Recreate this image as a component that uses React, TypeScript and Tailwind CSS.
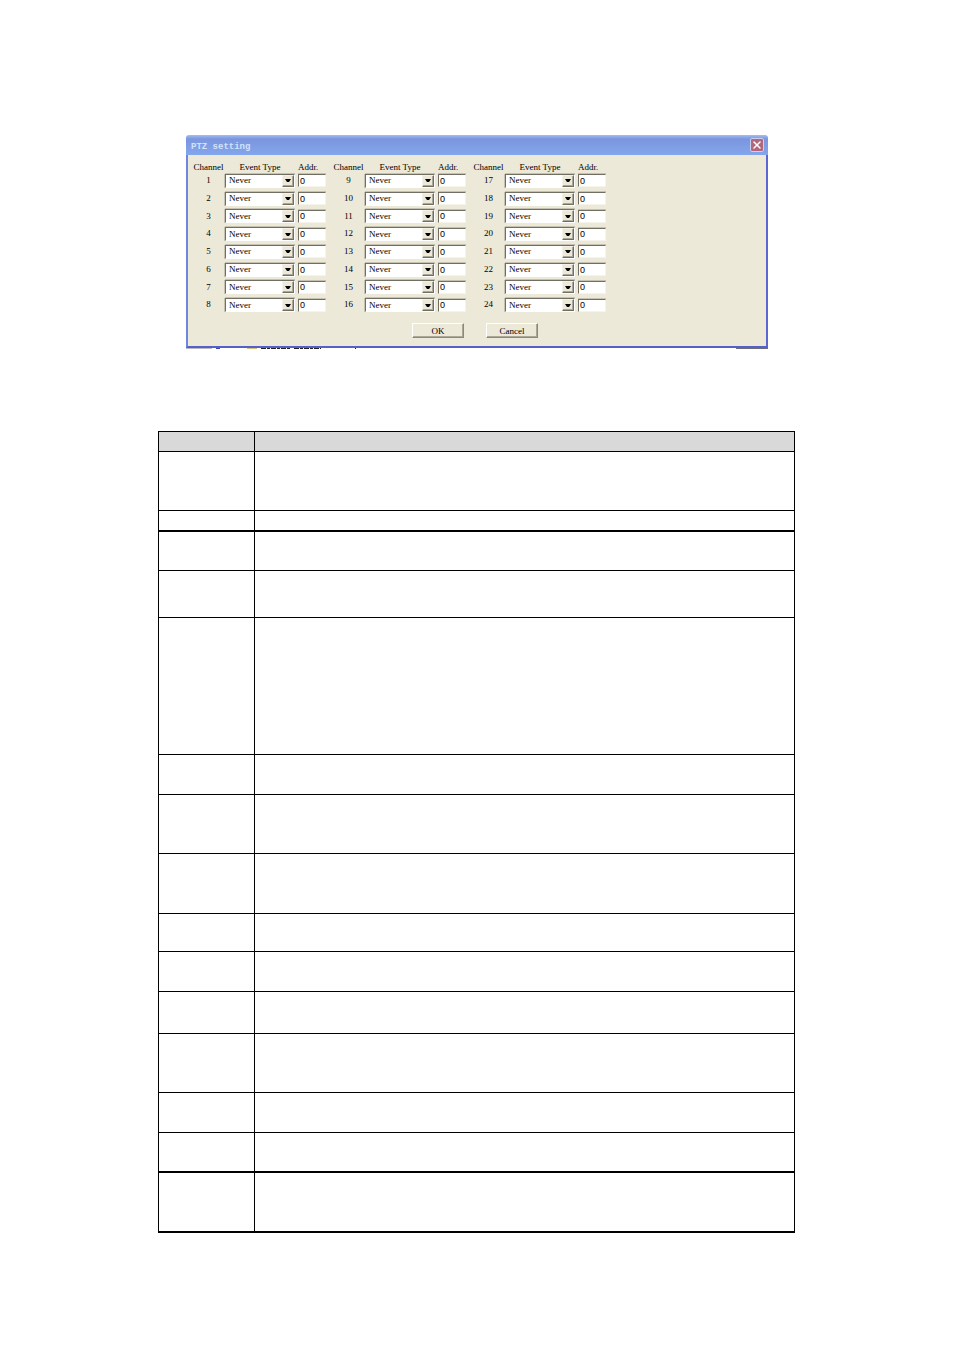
import { X } from "lucide-react";

const CHANNEL_GROUPS = [
  [1, 2, 3, 4, 5, 6, 7, 8],
  [9, 10, 11, 12, 13, 14, 15, 16],
  [17, 18, 19, 20, 21, 22, 23, 24],
];

// row heights of the description table, including the line under each row
const ROWS = [
  "h-[59px] border-b",
  "h-[21px] border-b-2",
  "h-[39px] border-b",
  "h-[47px] border-b",
  "h-[137px] border-b",
  "h-[40px] border-b",
  "h-[59px] border-b",
  "h-[60px] border-b",
  "h-[38px] border-b",
  "h-[40px] border-b",
  "h-[42px] border-b",
  "h-[59px] border-b",
  "h-[40px] border-b",
  "h-[40px] border-b-2",
  "h-[60px] border-b-2",
];

function ChannelRow({ channel }: { channel: number }) {
  return (
    <div className="flex items-center">
      <label htmlFor={`type-${channel}`} className="w-[33px] text-center">
        {channel}
      </label>
      <div className="relative w-[70px]">
        <select
          id={`type-${channel}`}
          className="block h-[14px] w-full appearance-none rounded-none border border-b-white border-l-[#716f64] border-r-white border-t-[#716f64] bg-white pl-[3px] leading-[11px] shadow-[0_-1px_0_#c5c2b2,-1px_0_0_#c5c2b2] outline-none"
        >
          <option>Never</option>
        </select>
        <span className="pointer-events-none absolute right-px top-px flex h-[12px] w-[12px] items-center justify-center border border-b-[#716f64] border-l-[#f4f2e8] border-r-[#716f64] border-t-[#f4f2e8] bg-[#ece9d8] shadow-[inset_-1px_-1px_0_#aca899]">
          <svg viewBox="0 0 6 3" className="h-[3px] w-[6px]">
            <path d="M0 0h6L4 3H2z" fill="#000" />
          </svg>
        </span>
      </div>
      <input
        type="text"
        aria-label={`Address ${channel}`}
        defaultValue="0"
        className="ml-[3px] block h-[13px] w-[28px] rounded-none border border-b-[#f6f4ea] border-l-[#716f64] border-r-[#f6f4ea] border-t-[#716f64] bg-white pl-px font-['Liberation_Sans',sans-serif] leading-[11px] shadow-[0_-1px_0_#c5c2b2] outline-none"
      />
    </div>
  );
}

function ChannelGroup({ channels }: { channels: number[] }) {
  return (
    <div>
      <div className="flex h-[10px] items-center leading-[10px]">
        <span className="w-[33px] text-center">Channel</span>
        <span className="w-[70px] text-center">Event Type</span>
        <span className="ml-[3px]">Addr.</span>
      </div>
      <div className="grid h-[142px] grid-rows-8">
        {channels.map((channel) => (
          <ChannelRow key={channel} channel={channel} />
        ))}
      </div>
    </div>
  );
}

function DialogButton({ children }: { children: string }) {
  return (
    <button
      type="button"
      className="h-[15px] w-[52px] border border-b-[#8c897a] border-l-white border-r-[#8c897a] border-t-white bg-[#ece9d8] leading-[12px] shadow-[inset_-1px_-1px_0_#aca899]"
    >
      {children}
    </button>
  );
}

// sliver of the window behind, left visible under the dialog
function BackgroundSliver() {
  return (
    <svg
      viewBox="0 0 582 1"
      preserveAspectRatio="none"
      className="block h-px w-full"
      aria-hidden="true"
    >
      <path d="M0 .5h26" stroke="#b9b9bd" />
      <path d="M30 .5h4" stroke="#3b47b0" />
      <path d="M61 .5h10" stroke="#d8c27c" />
      <path d="M75 .5h29M108 .5h27" stroke="#222" strokeDasharray="5 1 3 1" />
      <path d="M169 .5h1" stroke="#222" />
      <path d="M550 .5h32" stroke="#6d6d78" />
    </svg>
  );
}

function PtzDialog() {
  return (
    <section className="mx-auto max-w-[582px] font-['Liberation_Serif',serif] text-[9px] text-black">
      <header className="flex h-[20px] items-center justify-between rounded-t-[3px] bg-linear-to-b from-[#a4bdf0] via-[#7a96df] via-20% to-[#83a6ec] pl-[5px] pr-[4px]">
        <h1 className="pt-[3px] font-['Liberation_Mono',monospace] text-[9px] font-bold leading-[12px] text-[#d3e2fb]">
          PTZ setting
        </h1>
        <button
          type="button"
          aria-label="Close"
          className="flex h-[14px] w-[14px] items-center justify-center rounded-xs border border-[#c9cdf0] bg-[#b2677c] text-white"
        >
          <X size={12} strokeWidth={3} />
        </button>
      </header>
      <form className="border-x-2 border-b-2 border-b-[#5560c8] border-l-[#6f86e0] border-r-[#5c68d2] bg-[#ece9d8] pb-[8px] pt-[7px]">
        <div className="flex gap-[6px] pl-[4px]">
          {CHANNEL_GROUPS.map((channels) => (
            <ChannelGroup key={channels[0]} channels={channels} />
          ))}
        </div>
        <div className="mt-[9px] flex justify-center gap-[22px] pr-1">
          <DialogButton>OK</DialogButton>
          <DialogButton>Cancel</DialogButton>
        </div>
      </form>
      <BackgroundSliver />
    </section>
  );
}

function DescriptionTable() {
  return (
    <table className="w-full table-fixed border-separate border-spacing-0 border-l border-t border-black">
      <colgroup>
        <col className="w-[96px]" />
        <col />
      </colgroup>
      <thead>
        <tr>
          <th className="h-[20px] border-b border-r border-black bg-[#d9d9d9] p-0" />
          <th className="h-[20px] border-b border-r border-black bg-[#d9d9d9] p-0" />
        </tr>
      </thead>
      <tbody>
        {ROWS.map((row, i) => (
          <tr key={i}>
            <td className={`${row} border-r border-black p-0`} />
            <td className={`${row} border-r border-black p-0`} />
          </tr>
        ))}
      </tbody>
    </table>
  );
}

export default function App() {
  return (
    <main className="min-h-screen bg-white pb-[117px] pt-[135px]">
      <PtzDialog />
      <div className="mt-[82px] pl-[158px] pr-[159px]">
        <DescriptionTable />
      </div>
    </main>
  );
}
